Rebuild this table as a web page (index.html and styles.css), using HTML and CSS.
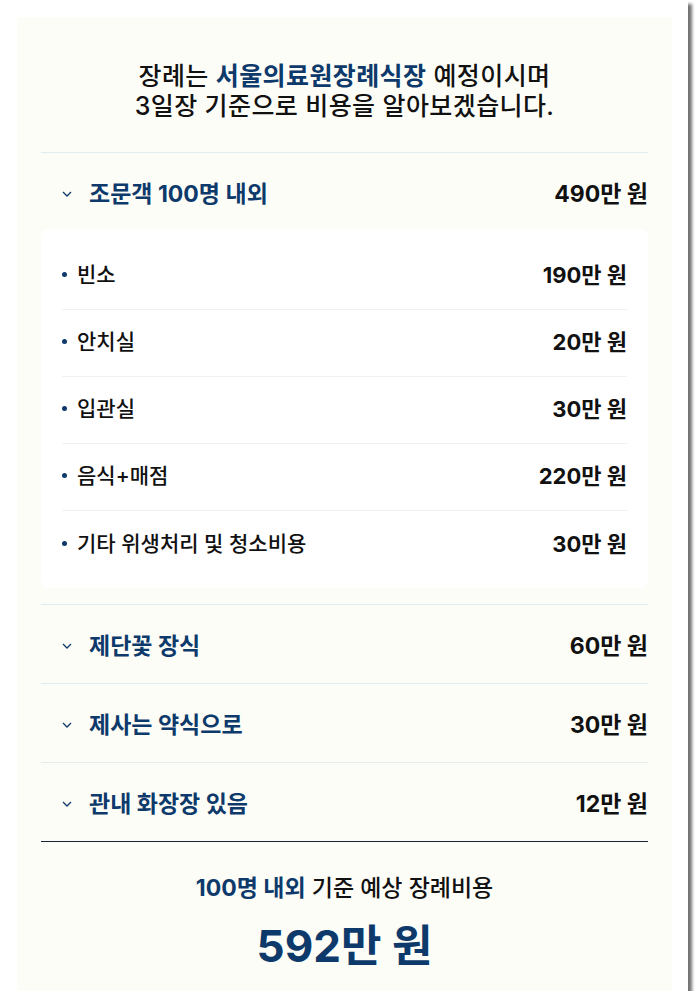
FILE: index.html
```html
<!DOCTYPE html>
<html lang="ko">
<head>
    <meta charset="UTF-8">
    <meta name="viewport" content="width=device-width, initial-scale=1.0">
    <title>장례비용 안내</title>
    <link rel="stylesheet" href="styles.css">
</head>
<body>

<div class="frame">
    <div class="card">

        <p class="intro">장례는 <strong>서울의료원장례식장</strong> 예정이시며<br>3일장 기준으로 비용을 알아보겠습니다.</p>

        <ul class="groups">
            <!-- 조문객 -->
            <li class="group">
                <div class="group-head">
                    <svg class="chevron" width="10" height="6" viewBox="0 0 10 6"><polyline points="1,1 5,5 9,1" /></svg>
                    <span class="group-title">조문객 100명 내외</span>
                    <span class="price">490만 원</span>
                </div>
                <ul class="items">
                    <li class="item"><span class="item-name">빈소</span><span class="item-price">190만 원</span></li>
                    <li class="item"><span class="item-name">안치실</span><span class="item-price">20만 원</span></li>
                    <li class="item"><span class="item-name">입관실</span><span class="item-price">30만 원</span></li>
                    <li class="item"><span class="item-name">음식+매점</span><span class="item-price">220만 원</span></li>
                    <li class="item"><span class="item-name">기타 위생처리 및 청소비용</span><span class="item-price">30만 원</span></li>
                </ul>
            </li>

            <li class="group">
                <div class="group-head">
                    <svg class="chevron" width="10" height="6" viewBox="0 0 10 6"><polyline points="1,1 5,5 9,1" /></svg>
                    <span class="group-title">제단꽃 장식</span>
                    <span class="price">60만 원</span>
                </div>
            </li>

            <li class="group">
                <div class="group-head">
                    <svg class="chevron" width="10" height="6" viewBox="0 0 10 6"><polyline points="1,1 5,5 9,1" /></svg>
                    <span class="group-title">제사는 약식으로</span>
                    <span class="price">30만 원</span>
                </div>
            </li>

            <li class="group">
                <div class="group-head">
                    <svg class="chevron" width="10" height="6" viewBox="0 0 10 6"><polyline points="1,1 5,5 9,1" /></svg>
                    <span class="group-title">관내 화장장 있음</span>
                    <span class="price">12만 원</span>
                </div>
            </li>
        </ul>

        <div class="total">
            <p class="total-label"><strong>100명 내외</strong> 기준 예상 장례비용</p>
            <p class="total-sum">592만 원</p>
        </div>

    </div>
</div>

</body>
</html>
```

FILE: styles.css
```css
body { margin: 0; background-color: #fff; font-family: Inter, "Noto Sans CJK KR", sans-serif; color: #111; }
ul { list-style: none; margin: 0; padding: 0; }
p { margin: 0; }

.frame { width: 688px; height: 991px; padding: 17px 16px 0 17px; box-sizing: border-box; background-color: #fff; box-shadow: 4px 4px 3px rgba(0, 0, 0, 0.55); overflow: hidden; }
.card { height: 100%; background-color: #fdfdf8; padding: 44px 24px 0; box-sizing: border-box; }

.intro { text-align: center; font-size: 25px; line-height: 30px; font-weight: 500; letter-spacing: 0.4px; color: #111; }
.intro strong { color: #0d3a6b; font-weight: 700; }

.groups { margin-top: 31px; }
.group { border-top: 1px solid #e2ecec; }
.group:last-child { border-bottom: 1px solid #1c2238; }

.group-head { display: flex; align-items: center; height: 78px; padding-left: 21px; }
.chevron { fill: none; stroke: #0d3a6b; stroke-width: 1.3; margin: 3px 17px 0 0; }
.group-title { flex: 1; font-size: 23px; font-weight: 700; color: #0d3a6b; }
.price { font-size: 23px; font-weight: 700; color: #111; }

.items { background-color: #fff; border-radius: 8px; padding: 14px 21px 10px; margin: -2px 0 16px; }
.item { display: flex; align-items: center; height: 67px; padding-bottom: 6px; box-sizing: border-box; border-bottom: 1px solid #edf1f0; }
.item:last-child { border-bottom: none; }
.item-name { flex: 1; font-size: 21px; font-weight: 500; color: #111; display: flex; align-items: center; }
.item-name::before { content: ""; width: 5px; height: 5px; border-radius: 50%; background-color: #0d3a6b; margin: 3px 10px 0 0; }
.item-price { font-size: 22px; font-weight: 700; color: #111; }

.total { text-align: center; padding-top: 31px; }
.total-label { font-size: 23px; line-height: 30px; font-weight: 500; color: #111; }
.total-label strong { color: #0d3a6b; font-weight: 700; }
.total-sum { margin-top: 18px; font-size: 44px; line-height: 50px; font-weight: 700; color: #0d3a6b; }
```
